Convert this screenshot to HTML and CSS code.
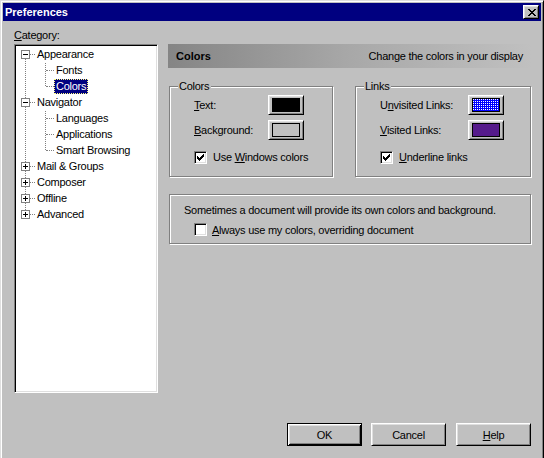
FILE: index.html
```html
<!DOCTYPE html>
<html>
<head>
<meta charset="utf-8">
<title>Preferences</title>
<link rel="stylesheet" href="styles.css">
</head>
<body>
<div class="window">
  <div class="titlebar">
    <span class="title">Preferences</span>
    <button class="close" aria-label="Close">
      <svg width="8" height="7" viewBox="0 0 8 7" shape-rendering="crispEdges"><path fill="#000" d="M0 0h2v1h-2z M6 0h2v1h-2z M1 1h2v1h-2z M5 1h2v1h-2z M2 2h4v1h-4z M3 3h2v1h-2z M2 4h4v1h-4z M1 5h2v1h-2z M5 5h2v1h-2z M0 6h2v1h-2z M6 6h2v1h-2z"/></svg>
    </button>
  </div>
  <div class="content">
    <div class="main">
      <div class="cat-label"><u>C</u>ategory:</div>
      <div class="treebox">
        <ul class="tree">
          <li>
            <div class="row"><span class="exp"></span><span class="stub"></span><span class="lbl">Appearance</span></div>
            <ul class="kids">
              <li class="row kid"><span class="stub"></span><span class="lbl">Fonts</span></li>
              <li class="row kid"><span class="stub"></span><span class="lbl sel">Colors</span></li>
            </ul>
          </li>
          <li>
            <div class="row"><span class="exp"></span><span class="stub"></span><span class="lbl">Navigator</span></div>
            <ul class="kids">
              <li class="row kid"><span class="stub"></span><span class="lbl">Languages</span></li>
              <li class="row kid"><span class="stub"></span><span class="lbl">Applications</span></li>
              <li class="row kid"><span class="stub"></span><span class="lbl">Smart Browsing</span></li>
            </ul>
          </li>
          <li><div class="row"><span class="exp plus"></span><span class="stub"></span><span class="lbl">Mail &amp; Groups</span></div></li>
          <li><div class="row"><span class="exp plus"></span><span class="stub"></span><span class="lbl">Composer</span></div></li>
          <li><div class="row"><span class="exp plus"></span><span class="stub"></span><span class="lbl">Offline</span></div></li>
          <li><div class="row"><span class="exp plus"></span><span class="stub"></span><span class="lbl">Advanced</span></div></li>
        </ul>
      </div>
      <div class="panel">
        <div class="header">
          <span class="h-title">Colors</span>
          <span class="h-desc">Change the colors in your display</span>
        </div>
        <div class="groups">
          <div class="group g-colors">
            <span class="legend">Colors</span>
            <div class="frow"><span class="flbl"><u>T</u>ext:</span><button class="sw"><span class="swatch black"></span></button></div>
            <div class="frow"><span class="flbl"><u>B</u>ackground:</span><button class="sw"><span class="swatch gray"></span></button></div>
            <div class="frow checkrow"><span class="cb"><svg width="7" height="7" viewBox="0 0 7 7" shape-rendering="crispEdges"><path fill="#000" d="M6 0h1v1h-1z M5 1h2v1h-2z M0 2h1v1h-1z M4 2h3v1h-3z M0 3h2v1h-2z M3 3h3v1h-3z M0 4h5v1h-5z M1 5h3v1h-3z M2 6h1v1h-1z"/></svg></span><span class="cblbl">Use <u>W</u>indows colors</span></div>
          </div>
          <div class="group g-links">
            <span class="legend">Links</span>
            <div class="frow"><span class="flbl">U<u>n</u>visited Links:</span><button class="sw"><span class="swatch blue"></span></button></div>
            <div class="frow"><span class="flbl"><u>V</u>isited Links:</span><button class="sw"><span class="swatch purple"></span></button></div>
            <div class="frow checkrow"><span class="cb"><svg width="7" height="7" viewBox="0 0 7 7" shape-rendering="crispEdges"><path fill="#000" d="M6 0h1v1h-1z M5 1h2v1h-2z M0 2h1v1h-1z M4 2h3v1h-3z M0 3h2v1h-2z M3 3h3v1h-3z M0 4h5v1h-5z M1 5h3v1h-3z M2 6h1v1h-1z"/></svg></span><span class="cblbl"><u>U</u>nderline links</span></div>
          </div>
        </div>
        <div class="note">
          <p>Sometimes a document will provide its own colors and background.</p>
          <div class="noterow"><span class="cb"></span><span class="cblbl"><u>A</u>lways use my colors, overriding document</span></div>
        </div>
      </div>
    </div>
    <div class="buttons">
      <button class="btn default">OK</button>
      <button class="btn">Cancel</button>
      <button class="btn help"><u>H</u>elp</button>
    </div>
  </div>
</div>
</body>
</html>
```

FILE: styles.css
```css
html, body {
  margin: 0;
  padding: 0;
  overflow: hidden;
}
body {
  width: 544px;
  height: 458px;
  background: #c0c0c0;
  font-family: "Liberation Sans", Arial, sans-serif;
  font-size: 11px;
  color: #000;
  letter-spacing: -0.25px;
}
.window {
  box-sizing: border-box;
  width: 544px;
  height: 470px;
  background: #c0c0c0;
  border: 1px solid;
  border-color: #dfdfdf #000 #000 #dfdfdf;
  box-shadow: inset 1px 1px #fff, inset -1px -1px #808080;
  padding: 2px;
}
.titlebar {
  height: 18px;
  background: #000080;
  display: flex;
  align-items: center;
  padding-left: 2px;
  color: #fff;
}
.title {
  font-weight: bold;
  letter-spacing: 0;
}
.close {
  box-sizing: border-box;
  width: 16px;
  height: 14px;
  margin-left: auto;
  margin-right: 2px;
  padding: 0 0 0 1px;
  border: 1px solid;
  border-color: #fff #000 #000 #fff;
  box-shadow: inset 1px 1px #dfdfdf, inset -1px -1px #808080;
  background: #c0c0c0;
  display: flex;
  align-items: center;
  justify-content: center;
}
.close svg { display: block; }
.content {
  padding: 8px 9px 0 11px;
}
.main {
  display: grid;
  grid-template-columns: 144px 364px;
  grid-template-rows: 13px 349px;
  column-gap: 10px;
  row-gap: 2px;
}
.cat-label {
  grid-column: 1;
  grid-row: 1;
  line-height: 13px;
}
.treebox {
  grid-column: 1;
  grid-row: 2;
  box-sizing: border-box;
  width: 144px;
  height: 349px;
  background: #fff;
  border: 1px solid;
  border-color: #808080 #fff #fff #808080;
  box-shadow: inset 1px 1px #000, inset -1px -1px #dfdfdf;
  padding: 1px;
}
.tree, .kids {
  list-style: none;
  margin: 0;
  position: relative;
}
.tree {
  padding: 0 0 0 5px;
}
.tree::before {
  content: "";
  position: absolute;
  left: 9px;
  top: 8px;
  bottom: 8px;
  border-left: 1px dotted #808080;
}
.kids {
  padding: 0;
}
.kids::before {
  content: "";
  position: absolute;
  left: 24px;
  top: 1px;
  bottom: 8px;
  border-left: 1px dotted #808080;
}
.row {
  display: flex;
  align-items: center;
  height: 16px;
}
.exp {
  position: relative;
  box-sizing: border-box;
  width: 9px;
  height: 9px;
  border: 1px solid #808080;
  background: #fff;
}
.exp::before {
  content: "";
  position: absolute;
  left: 1px;
  top: 3px;
  width: 5px;
  height: 1px;
  background: #000;
}
.exp.plus::after {
  content: "";
  position: absolute;
  left: 3px;
  top: 1px;
  width: 1px;
  height: 5px;
  background: #000;
}
.stub {
  width: 5px;
  height: 0;
  border-top: 1px dotted #808080;
}
.kid {
  padding-left: 25px;
}
.kid .stub {
  width: 8px;
}
.lbl {
  padding: 0 2px;
  height: 15px;
  line-height: 15px;
  white-space: nowrap;
}
.lbl.sel {
  background: #000080;
  color: #fff;
  outline: 1px dotted #ffff80;
  outline-offset: -1px;
}
.panel {
  grid-column: 2;
  grid-row: 2;
}
.header {
  height: 24px;
  display: flex;
  align-items: center;
  justify-content: space-between;
  padding: 0 9px 0 8px;
  background: linear-gradient(90deg, #858585 0%, #a8a8a8 50%, #c0c0c0 100%);
}
.h-title {
  font-weight: bold;
  letter-spacing: 0;
}
.groups {
  display: flex;
  gap: 22px;
  margin: 18px 0 0 1px;
}
.group {
  position: relative;
  box-sizing: border-box;
  border: 1px solid #808080;
  box-shadow: 1px 1px #fff, inset 1px 1px #fff;
  padding: 8px 0 9px 24px;
}
.g-colors { width: 164px; }
.g-links { width: 176px; }
.legend {
  position: absolute;
  top: -7px;
  left: 8px;
  padding: 0 2px 0 1px;
  background: #c0c0c0;
  line-height: 13px;
}
.frow {
  display: flex;
  align-items: center;
  height: 20px;
}
.frow + .frow { margin-top: 5px; }
.frow.checkrow { margin-top: 7px; }
.g-colors .flbl { width: 74px; }
.g-links .flbl { width: 88px; }
.flbl { white-space: nowrap; }
.sw {
  box-sizing: border-box;
  width: 36px;
  height: 20px;
  padding: 2px 3px;
  border: 1px solid;
  border-color: #fff #000 #000 #fff;
  box-shadow: inset 1px 1px #dfdfdf, inset -1px -1px #808080;
  background: #c0c0c0;
  display: flex;
}
.swatch {
  flex: 1;
  box-sizing: border-box;
  border: 1px solid #000;
}
.swatch.black { background: #000; }
.swatch.gray { background: #c0c0c0; }
.swatch.blue {
  background-color: #fff;
  background-image:
    linear-gradient(90deg, transparent 1px, #0000ff 1px),
    linear-gradient(180deg, transparent 1px, #0000ff 1px);
  background-size: 2px 2px;
}
.swatch.purple { background: #551a8b; }
.cb {
  box-sizing: border-box;
  width: 13px;
  height: 13px;
  flex: none;
  border: 1px solid;
  border-color: #808080 #fff #fff #808080;
  box-shadow: inset 1px 1px #000, inset -1px -1px #dfdfdf;
  background: #fff;
  padding: 2px;
  margin-right: 6px;
}
.cb svg { display: block; }
.cblbl { white-space: nowrap; }
.note {
  box-sizing: border-box;
  width: 362px;
  height: 50px;
  margin: 17px 0 0 1px;
  border: 1px solid #808080;
  box-shadow: 1px 1px #fff, inset 1px 1px #fff;
  padding: 9px 0 0 14px;
}
.note p {
  margin: 0;
  line-height: 13px;
  white-space: nowrap;
}
.noterow {
  display: flex;
  align-items: center;
  height: 13px;
  margin: 6px 0 0 10px;
}
.noterow .cb { margin-right: 5px; }
.buttons {
  display: flex;
  justify-content: flex-end;
  gap: 9px;
  margin-top: 30px;
  padding-right: 1px;
}
.btn {
  box-sizing: border-box;
  width: 75px;
  height: 23px;
  padding: 0;
  border: 1px solid;
  border-color: #fff #000 #000 #fff;
  box-shadow: inset 1px 1px #dfdfdf, inset -1px -1px #808080;
  background: #c0c0c0;
  font-family: "Liberation Sans", Arial, sans-serif;
  font-size: 11px;
  letter-spacing: -0.25px;
  color: #000;
}
.btn.default {
  border-color: #000;
  box-shadow: inset 1px 1px #fff, inset -1px -1px #000, inset 2px 2px #dfdfdf, inset -2px -2px #808080;
}
.btn.help { margin-left: 1px; }
```
